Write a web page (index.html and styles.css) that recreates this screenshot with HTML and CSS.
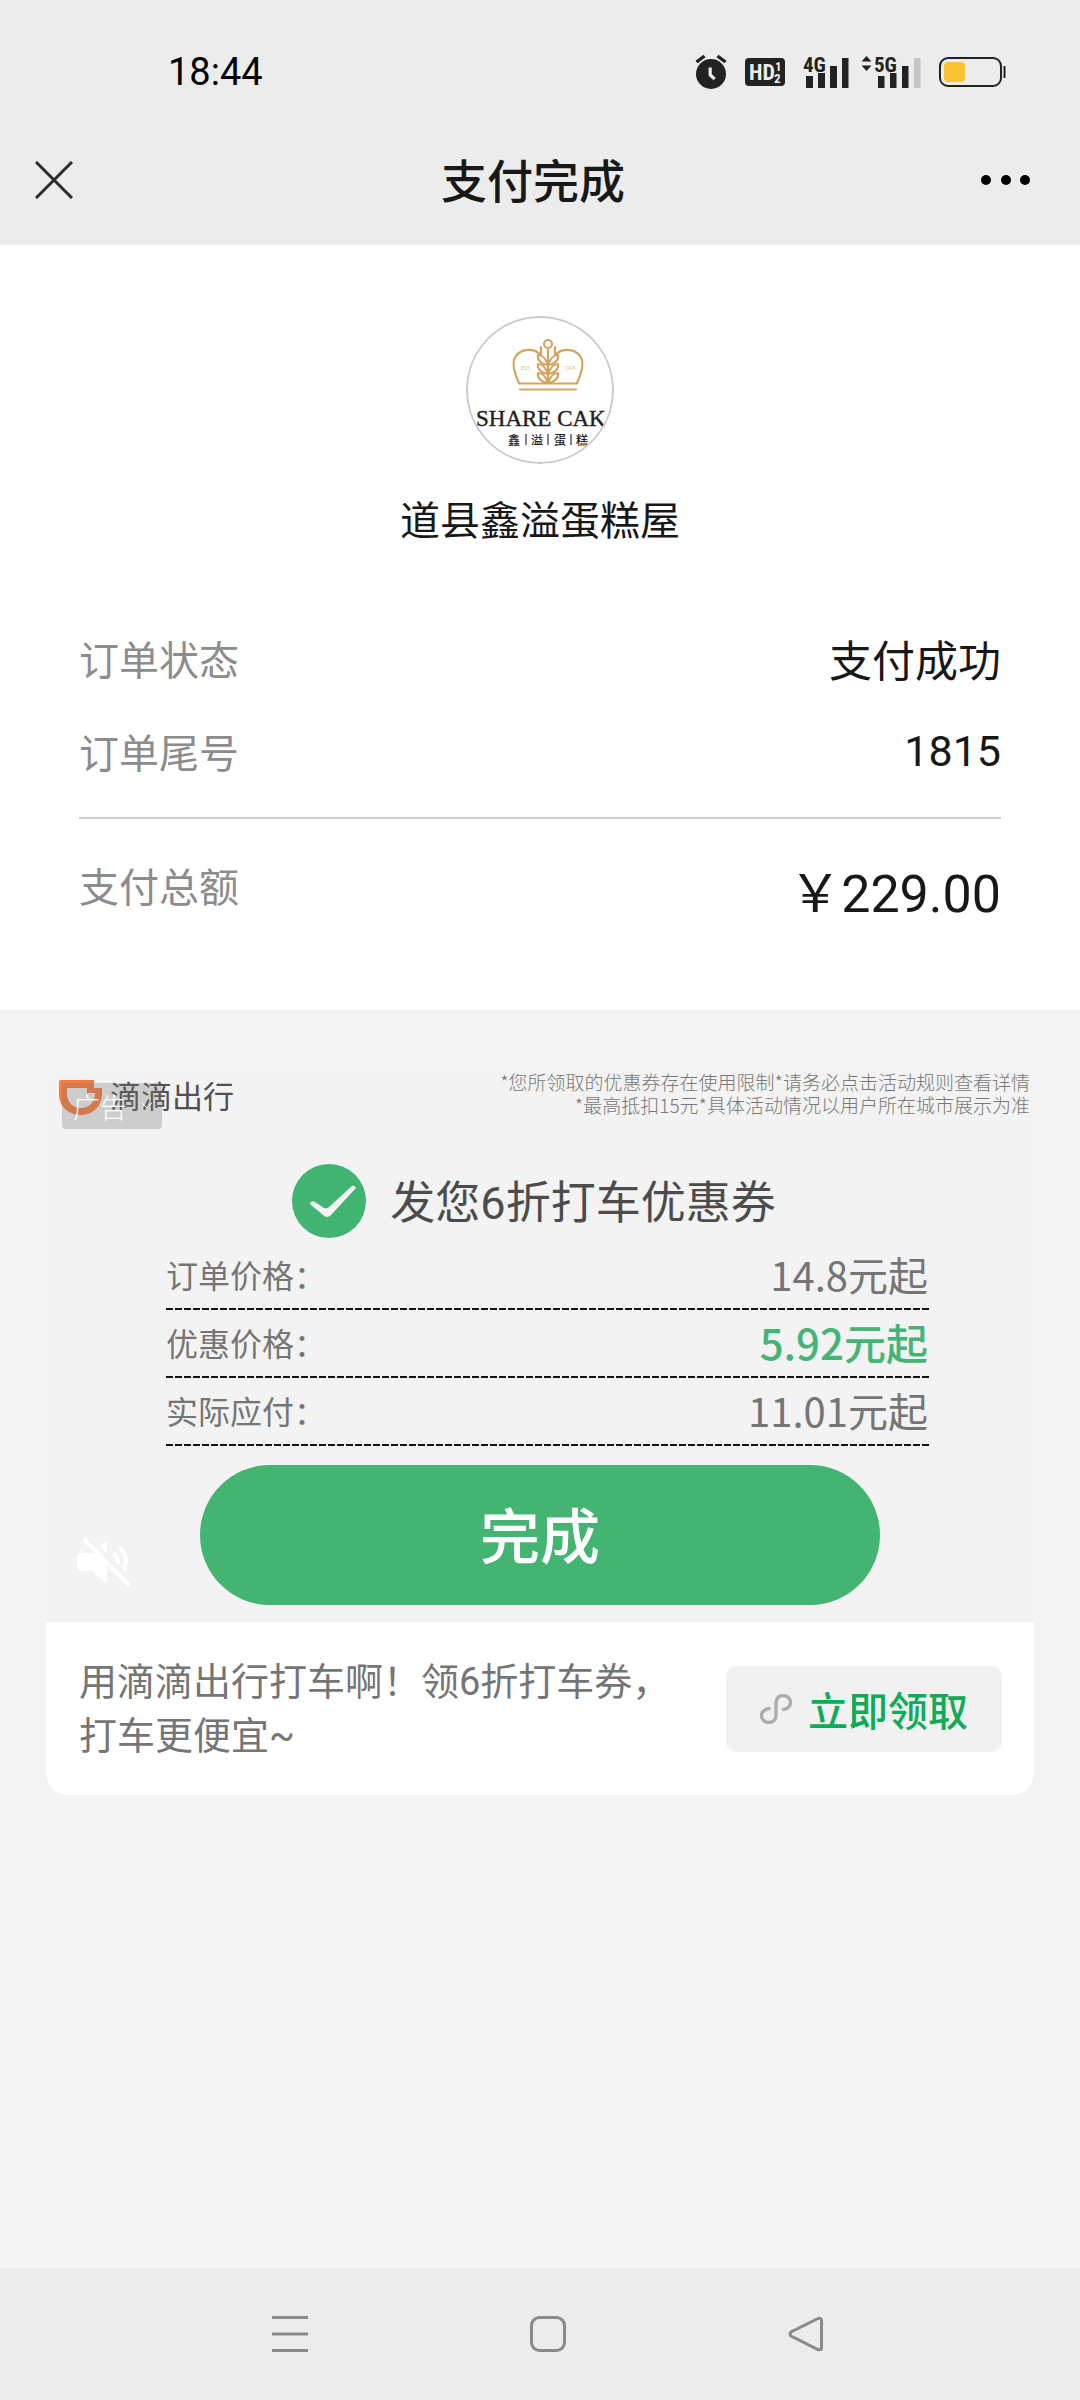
FILE: index.html
```html
<!DOCTYPE html>
<html lang="zh-CN">
<head>
	<meta charset="UTF-8">
	<meta name="viewport" content="width=device-width, initial-scale=1">
	<title>支付完成</title>
	<link rel="stylesheet" href="styles.css">
</head>
<body>
	<header id="header">
		<div class="status-bar">
			<span class="time">18:44</span>
			<div class="status-icons">
				<svg class="alarm" width="32" height="36" viewBox="0 0 32 36">
					<circle cx="16" cy="20" r="15" fill="#222"/>
					<path d="M1.5 8l8-6M30.5 8l-8-6" stroke="#222" stroke-width="3.4"/>
					<path d="M15.2 13.500v7.500l4.500 4" fill="none" stroke="#ececec" stroke-width="3.200"/>
				</svg>
				<svg class="hd" width="40" height="28" viewBox="0 0 40 28">
					<rect width="40" height="28" rx="4" fill="#222"/>
					<text x="4" y="22" font-size="22" fill="#ececec">HD</text>
					<text x="30" y="13" font-size="13" fill="#ececec">1</text>
					<text x="29" y="25" font-size="13" fill="#ececec">2</text>
				</svg>
				<svg class="sim1" width="46" height="34" viewBox="0 0 46 34">
					<text x="0" y="17" font-size="21" fill="#222">4G</text>
					<path d="M3 21h7v12h-7zM15 18h7v15h-7zM27 11h7v22h-7zM39 3h6.500v30h-6.500z" fill="#222"/>
				</svg>
				<svg class="sim2" width="60" height="34" viewBox="0 0 60 34">
					<path d="M5.500 1l5 5.500h-10zM5.500 16l5-5.500h-10z" fill="#222"/>
					<text x="13" y="17" font-size="21" fill="#222">5G</text>
					<path d="M17 21h6.500v12h-6.500zM29 18h6.500v15h-6.500zM41 11h6.500v22h-6.500z" fill="#222"/>
					<path d="M53 3h6.500v30h-6.500z" fill="#c4c4c4"/>
				</svg>
				<svg class="battery" width="68" height="30" viewBox="0 0 68 30">
					<rect x="1" y="1" width="61" height="28" rx="8" fill="none" stroke="#222" stroke-width="2"/>
					<rect x="5" y="5" width="21" height="20" rx="4" fill="#fdc331"/>
					<path d="M65.500 9v12" stroke="#222" stroke-width="2"/>
				</svg>
			</div>
		</div>
		<div class="nav-bar">
			<button class="close" type="button" aria-label="关闭">
				<svg width="38" height="38" viewBox="0 0 38 38"><path d="M1 1l36 36M37 1L1 37" stroke="#2b2b2b" stroke-width="3"/></svg>
			</button>
			<h1>支付完成</h1>
			<button class="more" type="button" aria-label="更多">
				<svg width="50" height="10" viewBox="0 0 50 10"><circle cx="5" cy="5" r="5"/><circle cx="25" cy="5" r="5"/><circle cx="44" cy="5" r="5"/></svg>
			</button>
		</div>
	</header>

	<section id="order">
		<svg class="avatar" width="148" height="148" viewBox="0 0 148 148">
			<g fill="none" stroke="#d2a561" stroke-width="2.200" stroke-linecap="round" stroke-linejoin="round">
				<circle cx="82" cy="28" r="4"/>
				<path d="M53 67C48 56 45 46 50 40C56 32 68 32 75 39M111 67C116 56 119 46 114 40C108 32 96 32 89 39M53 67.500h58M54 73.500h56"/>
				<path d="M82 34v33M75 31v7M89 31v7"/>
				<path d="M82 49C80 43 76 39 72 39C71 44 75 48 82 49C89 48 93 44 92 39C88 39 84 43 82 49M82 58C80 52 76 48 72 48C71 53 75 57 82 58C89 57 93 53 92 48C88 48 84 52 82 58M82 67C80 61 76 57 72 57C71 62 75 66 82 67C89 66 93 62 92 57C88 57 84 61 82 67"/>
			</g>
			<text class="est" x="55" y="54">EST</text>
			<text class="est" x="98" y="54">1998</text>
			<text class="brand" x="10" y="110">SHARE CAK</text>
			<text class="brand-cn" x="42" y="129">鑫</text>
			<text class="brand-cn" x="65" y="129">溢</text>
			<text class="brand-cn" x="88" y="129">蛋</text>
			<text class="brand-cn" x="110" y="129">糕</text>
			<path d="M60 118v11M82 118v11M105 118v11" stroke="#333" stroke-width="1.200"/>
			<circle cx="74" cy="74" r="73" fill="none" stroke="#c9c9c9" stroke-width="2"/>
		</svg>
		<h2>道县鑫溢蛋糕屋</h2>
		<dl class="detail">
			<div class="row">
				<dt>订单状态</dt>
				<dd>支付成功</dd>
			</div>
			<div class="row">
				<dt>订单尾号</dt>
				<dd>1815</dd>
			</div>
			<div class="row total">
				<dt>支付总额</dt>
				<dd>￥229.00</dd>
			</div>
		</dl>
	</section>

	<main id="ad">
		<div class="card">
			<div class="poster">
				<div class="poster-top">
					<div class="didi">
						<svg width="44" height="36" viewBox="0 0 44 36">
							<path d="M0 2q0-2 2-2h33v8h8v5c0 13-9 22-21 22S0 27 0 14zM8 8v6c0 8 6 14 14 14s14-6 14-14v-1h-8V8z" fill="#fb7a3c" fill-rule="evenodd"/>
						</svg>
						<span>滴滴出行</span>
						<button class="ad-tag" type="button">广告
							<svg width="12" height="8" viewBox="0 0 12 8"><path d="M1 1l5 5 5-5" fill="none" stroke="#fff"/></svg>
						</button>
					</div>
					<p class="notice">*您所领取的优惠券存在使用限制*请务必点击活动规则查看详情<br>*最高抵扣15元*具体活动情况以用户所在城市展示为准</p>
				</div>
				<div class="coupon-title">
					<svg width="74" height="74" viewBox="0 0 74 74">
						<circle cx="37" cy="37" r="37" fill="#42b472"/>
						<path d="M18 39q2-3 5-1l9 6q3 1 5-1L60 22q3-1 4 2L39 51q-4 4-8 0L19 41z" fill="#f4f4f4"/>
					</svg>
					<h3>发您6折打车优惠券</h3>
				</div>
				<dl class="price">
					<div class="price-row">
						<dt>订单价格：</dt>
						<dd>14.8元起</dd>
					</div>
					<div class="price-row">
						<dt>优惠价格：</dt>
						<dd class="off">5.92元起</dd>
					</div>
					<div class="price-row">
						<dt>实际应付：</dt>
						<dd>11.01元起</dd>
					</div>
				</dl>
				<button class="finish" type="button">完成</button>
				<button class="mute" type="button" aria-label="静音">
					<svg width="54" height="50" viewBox="0 0 54 50">
						<path d="M2 15h14L26 5q4-3 4 1v36q0 4-4 1L16 33H2q-2 0-2-2V17q0-2 2-2z" fill="#fff"/>
						<path d="M37 15q7 9 1 17M43 9q11 14 1 28" fill="none" stroke="#fff" stroke-width="4"/>
						<path d="M11 0l43 43" stroke="#f3f3f3" stroke-width="5"/>
						<path d="M8 2l44 45" stroke="#fff" stroke-width="4" stroke-linecap="round"/>
					</svg>
				</button>
			</div>
			<div class="card-foot">
				<p>用滴滴出行打车啊！领6折打车券，打车更便宜~</p>
				<button class="get" type="button">
					<svg width="32" height="30" viewBox="0 0 32 30">
						<path d="M9 14.500C4 15.500 1.500 18.500 1.500 21.500C1.500 25.500 5 28.500 9 28.500C13 28.500 16 25.500 16 21.500V8.500C16 4.500 19 1.500 23 1.500C27 1.500 30.500 4.500 30.500 8.500C30.500 11.500 28 14.500 23.500 15.500" fill="none" stroke="#adadad" stroke-width="3.400" stroke-linecap="round"/>
					</svg>
					立即领取
				</button>
			</div>
		</div>
	</main>

	<nav id="sys-nav">
		<button type="button" aria-label="最近任务">
			<svg width="36" height="36" viewBox="0 0 36 36"><path d="M0 1.500h36M0 18h36M0 34.500h36" stroke="#8a8a8a" stroke-width="3"/></svg>
		</button>
		<button type="button" aria-label="主页">
			<svg width="36" height="36" viewBox="0 0 36 36"><rect x="1.500" y="1.500" width="33" height="33" rx="8" fill="none" stroke="#8a8a8a" stroke-width="3"/></svg>
		</button>
		<button type="button" aria-label="返回">
			<svg width="36" height="36" viewBox="0 0 36 36"><path d="M30 2.500L3 16q-2 2 0 4l27 13.500q3.500 1 3.500-2V4.500q0-3-3.500-2z" fill="none" stroke="#8a8a8a" stroke-width="3"/></svg>
		</button>
	</nav>
</body>
</html>
```
FILE: styles.css
```css
*{
	margin: 0;
	padding: 0;
	box-sizing: border-box;
}
body{
	min-height: 100vh;
	display: flex;
	flex-direction: column;
	background: #f4f4f4;
	color: #181818;
	font-family: Roboto, "Noto Sans CJK SC", sans-serif;
}
button{
	border: 0;
	background: none;
	font-family: inherit;
}
svg{
	display: block;
}

/* 顶部 */
#header{
	background: #ececec;
	padding-bottom: 29px;
}
.status-bar{
	height: 144px;
	padding: 0 73px 0 168px;
	display: flex;
	align-items: center;
	justify-content: space-between;
}
.time{
	font-size: 38px;
	color: #000;
}
.status-icons{
	display: flex;
	align-items: center;
	gap: 18px;
	font-family: "Liberation Sans Narrow", "Roboto Condensed", Roboto, sans-serif;
	font-weight: 700;
}
.status-icons svg{
	overflow: visible;
}
.sim2{
	margin-left: -6px;
}
.nav-bar{
	height: 72px;
	padding: 0 49px 0 35px;
	display: grid;
	grid-template-columns: 1fr auto 1fr;
	align-items: center;
}
.nav-bar h1{
	padding-top: 5px;
	font-size: 46px;
	line-height: 67px;
	font-weight: 500;
}
.more{
	justify-self: end;
}
.close{
	justify-self: start;
}

/* 订单信息 */
#order{
	background: #fff;
	padding: 71px 79px 51px;
}
.avatar{
	margin: 0 auto;
	border-radius: 50%;
}
.est{
	font-size: 5px;
	fill: #dcc08e;
}
.brand{
	font-family: "Liberation Serif", serif;
	font-size: 23px;
	fill: #222;
	stroke: #222;
	stroke-width: .4px;
}
.brand-cn{
	font-size: 12px;
	font-weight: 500;
	fill: #222;
}
#order h2{
	margin-top: 28px;
	font-size: 40px;
	line-height: 60px;
	font-weight: 400;
	text-align: center;
}
.detail{
	margin-top: 59px;
}
.row{
	height: 93px;
	display: flex;
	justify-content: space-between;
	align-items: center;
}
.row dt{
	font-size: 40px;
	color: #8c8c8c;
}
.row dd{
	font-size: 43px;
}
.row.total{
	height: 142px;
	margin-top: 20px;
	border-top: 2px solid #cdcdcd;
}
.row.total dt{
	padding-bottom: 8px;
}
.row.total dd{
	font-size: 52px;
}

/* 广告卡片 */
#ad{
	flex: 1;
	padding: 57px 46px;
}
.card{
	background: #fff;
	border-radius: 22px;
	overflow: hidden;
}
.poster{
	position: relative;
	background: #f3f3f3;
	padding: 3px 8px 17px;
}
.poster-top{
	margin: 0 -4px 0 5px;
	display: flex;
	justify-content: space-between;
	align-items: flex-start;
}
.didi{
	position: relative;
	padding-top: 9px;
	display: flex;
	align-items: center;
	gap: 7px;
	font-size: 31px;
	line-height: 38px;
	color: #505050;
}
.ad-tag{
	position: absolute;
	left: 3px;
	top: 13px;
	width: 100px;
	height: 46px;
	padding-left: 11px;
	border-radius: 4px;
	background: rgba(120, 120, 120, .3);
	display: flex;
	align-items: center;
	gap: 14px;
	font-size: 27px;
	font-weight: 300;
	color: #fff;
}
.notice{
	font-family: "Noto Sans CJK SC", sans-serif;
	font-size: 19px;
	line-height: 23px;
	font-weight: 300;
	text-align: right;
	color: #777;
}
.coupon-title{
	margin-top: 47px;
	padding-right: 12px;
	display: flex;
	align-items: center;
	justify-content: center;
	gap: 24px;
}
.coupon-title h3{
	padding-bottom: 4px;
	font-size: 45px;
	font-weight: 400;
	color: #4c4c4c;
}
.price{
	margin: 4px 95px 0 112px;
	color: #757575;
	font-family: "Noto Sans CJK SC", sans-serif;
}
.price-row{
	height: 68px;
	padding: 0 3px 5px 0;
	display: flex;
	align-items: center;
	justify-content: space-between;
	background: repeating-linear-gradient(90deg, #111 0 7px, transparent 7px 9px) 0 100% / 100% 2px no-repeat;
}
.price-row dt{
	font-size: 32px;
}
.price-row dd{
	font-size: 40px;
}
.price-row dd.off{
	font-size: 42px;
	font-weight: 500;
	color: #46b475;
}
.finish{
	display: block;
	width: 70%;
	height: 140px;
	margin: 19px auto 0;
	padding-bottom: 6px;
	border-radius: 70px;
	background: #43b472;
	font-size: 60px;
	font-weight: 500;
	color: #fff;
}
.mute{
	position: absolute;
	left: 31px;
	bottom: 34px;
}
.card-foot{
	padding: 33px 32px 32px 33px;
	display: flex;
	align-items: center;
	justify-content: space-between;
}
.card-foot p{
	width: 600px;
	font-size: 38px;
	line-height: 54px;
	color: #757575;
}
.get{
	width: 276px;
	height: 86px;
	border-radius: 10px;
	background: #f1f1f1;
	display: flex;
	align-items: center;
	justify-content: center;
	gap: 16px;
	font-size: 40px;
	font-weight: 500;
	color: #10ab57;
}

/* 系统导航 */
#sys-nav{
	height: 132px;
	padding-left: 16px;
	background: #ececec;
	display: flex;
	align-items: center;
	justify-content: center;
	gap: 222px;
}
```
